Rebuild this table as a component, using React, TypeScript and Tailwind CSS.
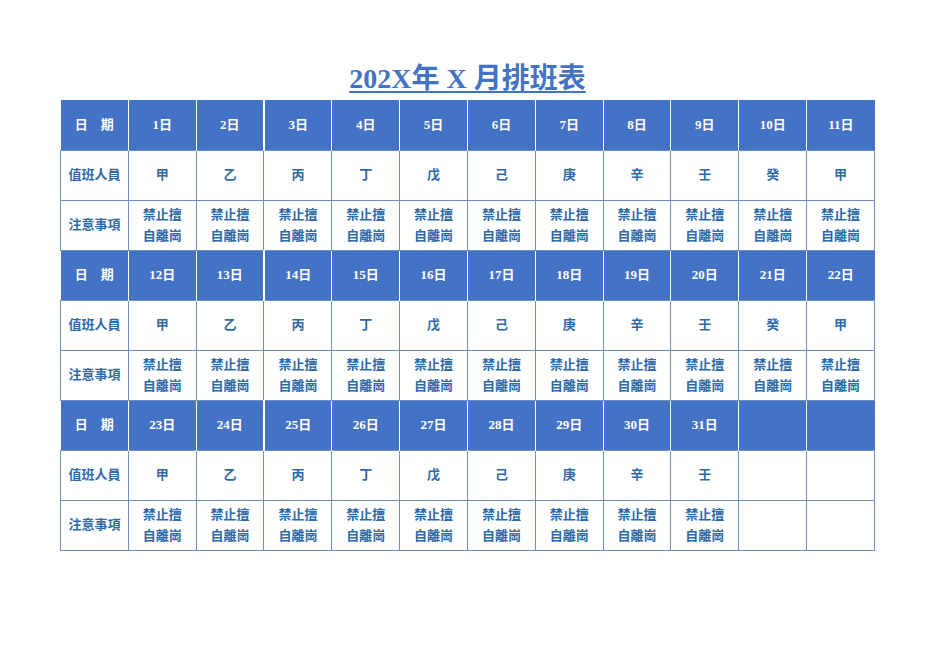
const stems = ['甲', '乙', '丙', '丁', '戊', '己', '庚', '辛', '壬', '癸', '甲'];

const blocks = [
  { days: [1, 2, 3, 4, 5, 6, 7, 8, 9, 10, 11], count: 11 },
  { days: [12, 13, 14, 15, 16, 17, 18, 19, 20, 21, 22], count: 11 },
  { days: [23, 24, 25, 26, 27, 28, 29, 30, 31], count: 9 },
];

const font = { fontFamily: '"Liberation Serif", "Noto Sans CJK TC", serif' };

export default function App() {
  return (
    <div className="w-[936px] h-[662px] bg-white pt-[61px] pl-[60px]" style={font}>
      <h1 className="w-[815px] text-center text-[28px] leading-[35px] font-bold text-[#4472c4] underline underline-offset-[3px] decoration-[1.5px] mb-[4px]">
        202X年 X 月排班表
      </h1>
      <table className="w-[815px] table-fixed border-collapse text-[13px] font-bold">
        <tbody>
          {blocks.map((b, bi) => (
            <BlockRows key={bi} days={b.days} count={b.count} />
          ))}
        </tbody>
      </table>
    </div>
  );
}

function BlockRows({ days, count }: { days: number[]; count: number }) {
  const cols = Array.from({ length: 11 }, (_, i) => i);
  const cell = 'h-[50px] border border-[#6f8fbf] text-center align-middle text-[#2f6aa8]';
  return (
    <>
      <tr className="bg-[#4472c4] text-white">
        <td className="h-[50px] text-center border-r border-white">日　期</td>
        {cols.map(i => (
          <td key={i} className={`h-[50px] text-center ${i < 10 ? (i === 1 ? 'border-r-2 border-white' : 'border-r border-white') : ''}`}>
            {i < days.length ? `${days[i]}日` : ''}
          </td>
        ))}
      </tr>
      <tr>
        <td className={cell}>值班人員</td>
        {cols.map(i => (
          <td key={i} className={cell}>{i < count ? stems[i] : ''}</td>
        ))}
      </tr>
      <tr>
        <td className={cell}>注意事項</td>
        {cols.map(i => (
          <td key={i} className={`${cell} leading-[21px]`}>
            {i < count ? (
              <>
                禁止擅<br />自離崗
              </>
            ) : ''}
          </td>
        ))}
      </tr>
    </>
  );
}
